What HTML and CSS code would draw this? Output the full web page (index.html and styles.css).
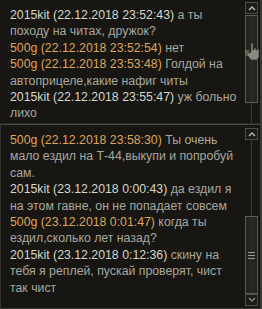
FILE: index.html
```html
<!DOCTYPE html>
<html>
<head>
<meta charset="utf-8">
<link rel="stylesheet" href="styles.css">
</head>
<body>
<div class="chat">
  <div class="panel top">
    <div class="log">
      <div class="msg"><span class="who w">2015kit (22.12.2018 23:52:43)</span> а ты<br>походу на читах, дружок?</div>
      <div class="msg"><span class="who o">500g (22.12.2018 23:52:54)</span> нет</div>
      <div class="msg"><span class="who o">500g (22.12.2018 23:53:48)</span> Голдой на<br>автоприцеле,какие нафиг читы</div>
      <div class="msg"><span class="who w">2015kit (22.12.2018 23:55:47)</span> уж больно<br>лихо</div>
    </div>
    <div class="sbar">
      <div class="btn"><svg width="8" height="6" viewBox="0 0 8 6"><path d="M1 5 L4 2 L7 5" fill="none" stroke="#bdbdb0" stroke-width="1.4"/></svg></div>
      <div class="track">
        <div class="thumb t1"></div>
        <div class="rail"></div>
      </div>
    </div>
    <svg class="cursor" width="16" height="18" viewBox="0 0 16 18">
      <path d="M6 1 h2 v7 h1 v-2 h2 v2 h1 v-1 h2 v8 l-2 3 h-6 l-3 -4 v-3 h2 v-1 h1 z" fill="#8a8a80" stroke="#2a2a24" stroke-width="0.6"/>
      <path d="M0 9 h4 M0 11 h4 M1 13 h3" stroke="#b0b0a4" stroke-width="0.8"/>
    </svg>
  </div>
  <div class="panel bottom">
    <div class="log">
      <div class="msg"><span class="who o">500g (22.12.2018 23:58:30)</span> Ты очень<br>мало ездил на Т-44,выкупи и попробуй<br>сам.</div>
      <div class="msg"><span class="who w">2015kit (23.12.2018 0:00:43)</span> да ездил я<br>на этом гавне, он не попадает совсем</div>
      <div class="msg"><span class="who o">500g (23.12.2018 0:01:47)</span> когда ты<br>ездил,сколько лет назад?</div>
      <div class="msg"><span class="who w">2015kit (23.12.2018 0:12:36)</span> скину на<br>тебя я реплей, пускай проверят, чист<br>так чист</div>
    </div>
    <div class="sbar">
      <div class="btn"><svg width="8" height="6" viewBox="0 0 8 6"><path d="M1 5 L4 2 L7 5" fill="none" stroke="#bdbdb0" stroke-width="1.4"/></svg></div>
      <div class="track">
        <div class="rail"></div>
        <div class="thumb t2"><span class="grip"></span></div>
      </div>
      <div class="btn"><svg width="8" height="6" viewBox="0 0 8 6"><path d="M1 1 L4 4 L7 1" fill="none" stroke="#8a8a80" stroke-width="1.4"/></svg></div>
    </div>
  </div>
</div>
</body>
</html>
```
FILE: styles.css
```css
html, body {
  margin: 0;
  padding: 0;
  background: #11110e;
}
.chat {
  width: 262px;
  height: 309px;
  display: flex;
  flex-direction: column;
  font-family: "Liberation Sans", Arial, sans-serif;
  font-size: 12.3px;
  line-height: 16.4px;
  color: #a8a89e;
}
.panel {
  position: relative;
  display: flex;
  background: #171612;
  border-right: 2px solid #3a3a34;
}
.panel.top {
  height: 123px;
  border-bottom: 1px solid #2a2a25;
}
.panel.bottom {
  flex: 1;
  border-top: 1px solid #4a4a42;
  border-left: 1px solid #34342e;
  border-bottom: 1px solid #3a3a34;
}
.log {
  flex: 1;
  padding: 7px 0 0 10px;
  white-space: nowrap;
}
.panel.bottom .log {
  padding: 7px 0 0 9px;
}
.who.w { color: #d6d6ca; }
.who.o { color: #dda55c; }
.sbar {
  width: 13px;
  margin-right: 2px;
  padding-top: 2px;
  display: flex;
  flex-direction: column;
}
.panel.bottom .sbar {
  padding-top: 3px;
  padding-bottom: 2px;
}
.btn {
  height: 10px;
  border: 1px solid #4e4e46;
  background: #1c1b17;
  display: flex;
  align-items: center;
  justify-content: center;
}
.track {
  flex: 1;
  display: flex;
  flex-direction: column;
  align-items: center;
}
.rail {
  flex: 1;
  width: 1px;
  background: #3a3a33;
}
.thumb {
  width: 11px;
  border: 1px solid #5c5c52;
  background: linear-gradient(90deg, #222119 0, #2a2922 50%, #222119 100%);
  display: flex;
  align-items: center;
  justify-content: center;
}
.thumb.t1 {
  height: 86px;
  margin-top: 1px;
}
.thumb.t2 {
  height: 76px;
}
.grip {
  width: 7px;
  height: 5px;
  border-top: 1px solid #9a9a8e;
  border-bottom: 1px solid #9a9a8e;
  background: linear-gradient(#0000 2px, #9a9a8e 2px, #9a9a8e 3px, #0000 3px);
}
.cursor {
  position: absolute;
  left: 245px;
  top: 42px;
}
```
